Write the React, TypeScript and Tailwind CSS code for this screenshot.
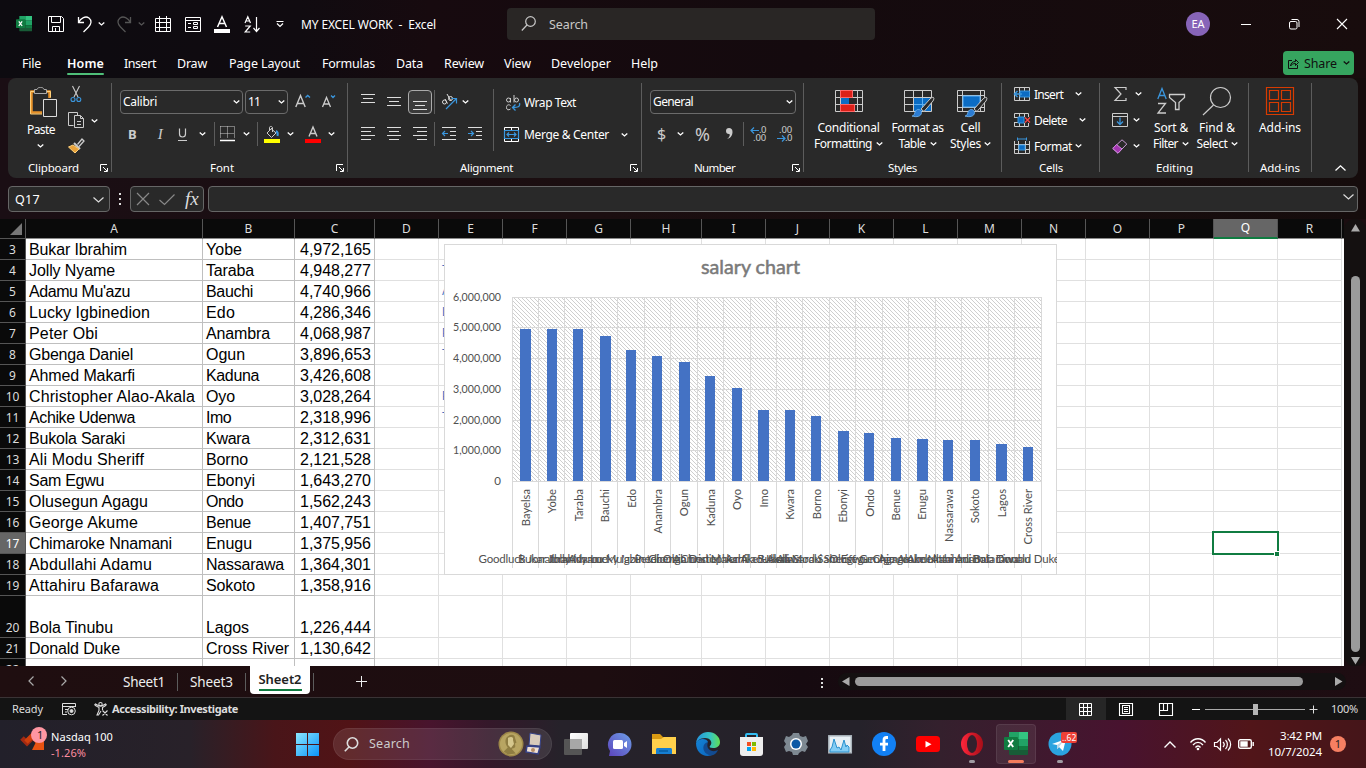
import React, { useLayoutEffect, useRef, useState } from "react";

/* Text stretched or tightened with letter spacing so that it takes exactly w pixels. */
function Fit({ w, children, className = "" }: { w: number; children: string; className?: string }) {
  const ref = useRef<HTMLSpanElement>(null);
  const [ls, setLs] = useState(0);
  useLayoutEffect(() => {
    if (ref.current) {
      const natural = ref.current.getBoundingClientRect().width;
      setLs((w - natural) / children.length);
    }
  }, [w, children]);
  return (
    <span className={"block shrink-0 whitespace-pre " + className} style={{ width: w }}>
      <span ref={ref} style={{ letterSpacing: ls }}>{children}</span>
    </span>
  );
}

function Ic({ w, h, children, className = "", sw = 1 }: { w: number; h: number; children: React.ReactNode; className?: string; sw?: number }) {
  return (
    <svg width={w} height={h} viewBox={`0 0 ${w} ${h}`} fill="none" stroke="currentColor" strokeWidth={sw} className={"block shrink-0 overflow-visible " + className}>
      {children}
    </svg>
  );
}

const Chev = ({ className = "" }: { className?: string }) => (
  <Ic w={7} h={4} sw={1.3} className={className}><path d="M.7.5 3.5 3 6.3.5" /></Ic>
);
const Launcher = ({ className = "" }: { className?: string }) => (
  <Ic w={9} h={9} className={className}><path d="M1.500 7V.5H8M4 3l4 4M8.500 4v3.500H5" /></Ic>
);
const VSep = ({ className = "" }: { className?: string }) => <div className={"w-px shrink-0 bg-[#5c5c5c] " + className} />;

function TitleBar() {
  return (
    <header className="flex h-12 items-center pl-4">
      <ExcelLogo size={16} />
      <Ic w={16} h={16} className="ml-4"><path d="M.5.5h13l2 2v13H.5zM3.500.5v6h9v-6M4.500 15.500v-5h7v5M7.500 12v3.500" /></Ic>
      <Ic w={16} h={17} sw={1.300} className="ml-[13px]"><path d="M1.500 1v5.500H7M1.500 6.500C4 2 8.500-.5 12 2c3 2.500 2.500 6-.5 9l-5 5" /></Ic>
      <Chev className="ml-[5px]" />
      <Ic w={16} h={17} sw={1.300} className="ml-3 text-[#555]"><path d="M13.500 1v5.500H8M13.500 6.500C11 2 6.500-.5 3 2c-3 2.500-2.500 6 .5 9l5 5" /></Ic>
      <Chev className="ml-[5px] text-[#555]" />
      <Ic w={16} h={16} className="ml-[10px]"><path d="M.5 2.500h15v13H.5zM.5 6.500h15M.5 11.500h15M4.500 0v15.500M11.500 0v15.500" /></Ic>
      <Ic w={16} h={15} className="ml-[14px]"><path d="M.5.5h15v14H.5zM.5 3.500h15M3 6.500h3M3 10.500h3M8.500 5.500h4v2h-4zM8.500 9.500h4v2h-4z" /></Ic>
      <Ic w={16} h={17} sw={1.500} className="ml-[13px]"><path d="M3.500 11 8 .8 12.500 11M5 7.500h6" /><path d="M0 13h16v4H0z" fill="#fff" stroke="none" /></Ic>
      <Ic w={17} h={17} sw={1.200} className="ml-[14px]"><path d="M1 7 3.800.7 6.500 7M2 5h3.600M1.200 10h5l-5 6h5M12.500 1v14.500M9.500 12l3 3.500 3-3.500" /></Ic>
      <Ic w={8} h={6} sw={1.200} className="ml-[15px]"><path d="M.5.5h7M1 2.500 4 5.500l3-3" /></Ic>
      <Fit w={135} className="ml-[17px] pt-[2px] text-[12px]">MY EXCEL WORK  -  Excel</Fit>
      <div className="ml-[71px] flex h-8 w-[368px] items-center rounded-[4px] bg-[#292625] pl-[14px] text-[#c8c8c8]">
        <Ic w={16} h={16} sw={1.200}><circle cx="9.500" cy="5.500" r="4.800" /><path d="M6 9 .8 14.500" /></Ic>
        <Fit w={39} className="ml-[12px] pt-[2px] text-[12.500px]">Search</Fit>
      </div>
      <div className="ml-[311px] flex h-6 w-6 items-center justify-center rounded-full bg-[#8764b8]"><Fit w={13} className="text-[11px]">EA</Fit></div>
      <div className="ml-[31px] h-px w-[10px] bg-white" />
      <Ic w={11} h={11} className="ml-[38px]"><rect x=".5" y="2.500" width="7.500" height="7.500" rx="1.500" /><path d="M2.500.5H8a2 2 0 0 1 2 2V8" /></Ic>
      <Ic w={10} h={10} sw={1.100} className="ml-[37px]"><path d="m0 0 10 10M10 0 0 10" /></Ic>
    </header>
  );
}

function ExcelLogo({ size }: { size: number }) {
  return (
    <svg width={size} height={size} viewBox="0 0 24 24" className="block shrink-0">
      <path d="M5 0h10v7H5z" fill="#21a366" /><path d="M15 0h9v7h-9z" fill="#33c481" />
      <path d="M5 7h10v7H5z" fill="#107c41" /><path d="M15 7h9v7h-9z" fill="#21a366" />
      <path d="M5 14h19v8c0 1-1 1-1 1H6c-1 0-1-1-1-1z" fill="#185c37" /><path d="M15 14h9v4h-9z" fill="#107c41" />
      <rect y="5" width="14" height="13" rx="1" fill="#107c41" />
      <path d="m4.200 8 5 7M9.200 8l-5 7" stroke="#fff" strokeWidth="1.900" />
    </svg>
  );
}

function MenuTabs() {
  return (
    <nav className="flex h-[30px] items-center pl-[22px] text-[12.500px]">
      <Fit w={19} className="pt-[2px]">File</Fit>
      <div className="ml-[26px] flex h-full flex-col justify-end pb-[3px]">
        <Fit w={37} className="text-[12.500px] font-semibold leading-[19px]">Home</Fit>
        <div className="h-[2px] w-[37px] rounded bg-[#4fbf79]" />
      </div>
      <Fit w={32} className="ml-5 pt-[2px]">Insert</Fit>
      <Fit w={30} className="ml-[21px] pt-[2px]">Draw</Fit>
      <Fit w={71} className="ml-[22px] pt-[2px]">Page Layout</Fit>
      <Fit w={53} className="ml-[22px] pt-[2px]">Formulas</Fit>
      <Fit w={27} className="ml-[21px] pt-[2px]">Data</Fit>
      <Fit w={40} className="ml-[21px] pt-[2px]">Review</Fit>
      <Fit w={27} className="ml-5 pt-[2px]">View</Fit>
      <Fit w={60} className="ml-5 pt-[2px]">Developer</Fit>
      <Fit w={27} className="ml-5 pt-[2px]">Help</Fit>
      <div className="ml-[625px] flex h-6 w-[71px] items-center rounded-[4px] bg-[#36a55f] pl-[5px] text-[#101010]">
        <Ic w={11} h={11}><path d="M4 2.500H.5v8h9V7M2.500 8c.5-3 2-4.500 5-4.500V1.500L10.500 4.500 7.500 7.500V5.500C5 5.500 3.500 6.500 2.500 8z" /></Ic>
        <Fit w={33} className="ml-[5px] pt-[2px]">Share</Fit>
        <Chev className="ml-[6px]" />
      </div>
    </nav>
  );
}

function Group({ label, lw, className, labelPad, launcher, children }: { label: string; lw: number; className: string; labelPad: string; launcher?: string; children: React.ReactNode }) {
  return (
    <section className={"flex h-full shrink-0 flex-col " + className}>
      <div className="h-[81px]">{children}</div>
      <div className={"flex h-[18px] items-center text-[11.500px] " + labelPad}>
        <Fit w={lw}>{label}</Fit>
        {launcher ? <Launcher className={launcher} /> : null}
      </div>
    </section>
  );
}

const Lines = ({ rows, className = "" }: { rows: number[][]; className?: string }) => (
  <Ic w={14} h={16} className={className}>{rows.map((r, i) => <path key={i} d={`M${r[0]} ${r[1] + 0.5}h${r[2]}`} />)}</Ic>
);

const Brush = () => (
  <g stroke="none">
    <path d="M29.500 7.500c.8.500.3 2-.5 3.500l-9 10.500-3-2.500 9-10c1.500-1.500 2.700-2 3.500-1.500z" fill="#292929" stroke="#c8c8c8" />
    <path d="M8 26c3 0 2-4 4.500-6 2-1.500 5 0 5 2.500 0 4-5 5-9.500 3.500z" fill="#2b7cd3" stroke="#74b7f0" strokeWidth=".8" />
  </g>
);

function Ribbon() {
  return (
    <div className="mx-2 flex h-[100px] rounded-[8px] bg-[#292929] text-[12px] text-white">
      <Group label="Clipboard" lw={51} className="w-[103px]" labelPad="pl-5" launcher="ml-5">
        <div className="flex">
          <div className="w-[58px] pt-[9px]">
            <Ic w={28} h={31} className="ml-[22px]"><path d="M6 4.500H1.500v21H12M17 4.500h2.500V11" stroke="#e8922a" strokeWidth="2.500" /><path d="M.5 27V4.500H6M16 4.500h4.500v6M.5 27H12" stroke="#ffd17b" /><path d="M4.500 6.500v-4H7C7.500.8 8.500.5 10.500.5S13.500.8 14 2.500h2.500v4z" fill="#292929" stroke="#aaa" /><path d="M13.500 12.500h13v17h-13z" fill="#292929" stroke="#ddd" /></Ic>
            <Fit w={28} className="ml-[19px] mt-[3px] leading-[18px]">Paste</Fit>
            <Chev className="ml-[29px] mt-[5px]" />
          </div>
          <div className="flex flex-col pt-2">
            <Ic w={12} h={17} sw={1.100} className="ml-1 text-[#ccc]"><path d="m2.500 0 5.500 11M9.500 0 4 11" /><circle cx="3" cy="13.500" r="2" stroke="#3a96dd" /><circle cx="8.800" cy="13.500" r="2" stroke="#3a96dd" /></Ic>
            <div className="mt-[9px] flex items-center">
              <Ic w={17} h={17} className="ml-[2px] text-[#ccc]"><path d="M9.500 3.500V.5H.5v13h5M6.500 3.500h6l3 3v9h-9zM12.500 3.500v3h3M9 9.500h4M9 12.500h4" /></Ic>
              <Chev className="ml-[6px]" />
            </div>
            <Ic w={17} h={17} className="ml-[2px] mt-[9px]"><path d="m9.500 6.500 4.500-5.500 2 2-5 5.500" stroke="#ccc" strokeWidth="1.300" /><path d="m6 5 6 6" stroke="#ccc" strokeWidth="2" /><path d="M5 7 .5 9l6.500 6 4-4z" fill="#e8a23b" stroke="#ffd17b" /></Ic>
          </div>
        </div>
      </Group>
      <VSep className="mt-[5px] h-[89px]" />
      <Group label="Font" lw={24} className="w-[235px]" labelPad="pl-[98px]" launcher="ml-[101px]">
        <div className="flex pl-2 pt-3">
          <div className="flex h-6 w-[123px] items-center rounded-[4px] border border-[#6b6b6b] pl-[2px]"><Fit w={34}>Calibri</Fit><Chev className="ml-[76px]" /></div>
          <div className="ml-[2px] flex h-6 w-[43px] items-center rounded-[4px] border border-[#6b6b6b] pl-[2px]"><Fit w={12}>11</Fit><Chev className="ml-[18px]" /></div>
          <Ic w={16} h={16} sw={1.400} className="ml-[7px] mt-1 text-[#ccc]"><path d="M.8 13 5.500 1.500 10.200 13M2.500 9.500h6" /><path d="M10.500 3.500 12.700 1.500 15 3.500" stroke="#3a96dd" /></Ic>
          <Ic w={14} h={16} sw={1.300} className="ml-[11px] mt-1 text-[#ccc]"><path d="M.5 13 4.500 3.500 8.500 13M2 10h5" /><path d="m9 1.500 2 2 2-2" stroke="#3a96dd" /></Ic>
        </div>
        <div className="mt-2 flex h-6 items-center pl-4 text-[#ccc]">
          <span className="w-[26px] text-[13px] font-bold leading-6">B</span>
          <span className="w-[24px] font-['Liberation_Serif',serif] text-[15px] italic leading-6">&nbsp;I</span>
          <Ic w={10} h={15} sw={1.200}><path d="M1.500 1.500V7c0 4 6 4 6 0V1.500M0 13.500h9" /></Ic>
          <Chev className="ml-[11px] text-white" />
          <VSep className="ml-2 h-6" />
          <Ic w={16} h={16} className="ml-[5px]"><path d="M.5.5h14M.5.5v12M14.500.5v12M7.500.5v12M.5 7.500h14" strokeDasharray="1 1" /><path d="M0 14.500h15" stroke="#fff" strokeWidth="1.500" /></Ic>
          <Chev className="ml-[7px] text-white" />
          <VSep className="ml-[7px] h-6" />
          <Ic w={16} h={17} className="ml-[6px]"><path d="m8 2-5 5 4.500 4.500 4.500-4.500L7 2.500M5.500 5V1.500C5.500 0 8.500 0 8.500 2v4" /><path d="M12 5c2 1 2 3 1.500 5" stroke="#3a96dd" strokeWidth="2" /><path d="M0 13h16v4H0z" fill="#ff0" stroke="none" /></Ic>
          <Chev className="ml-[7px] text-white" />
          <Ic w={16} h={17} sw={1.400} className="ml-[11px]"><path d="M4 10.500 8 1l4 9.500M5.500 7.500h5" /><path d="M0 13h16v4H0z" fill="red" stroke="none" /></Ic>
          <Chev className="ml-[7px] text-white" />
        </div>
      </Group>
      <VSep className="mt-[5px] h-[89px]" />
      <Group label="Alignment" lw={53} className="w-[293px]" labelPad="pl-[112px]" launcher="ml-[116px]">
        <div className="flex">
          <div className="w-[145px] text-[#ddd]">
            <div className="mt-3 flex h-6 items-center pl-[13px]">
              <Lines rows={[[0, 0, 14], [2, 4, 10], [0, 8, 14]]} />
              <Lines className="ml-3" rows={[[0, 3, 14], [2, 7, 10], [0, 11, 14]]} />
              <div className="ml-[7px] flex h-6 w-6 items-center justify-center rounded-[4px] border border-[#ababab] bg-[#3a3a3a]"><Lines rows={[[0, 7, 14], [2, 11, 10], [0, 15, 14]]} /></div>
              <VSep className="ml-[2px] h-6" />
              <Ic w={17} h={16} className="ml-[6px]"><circle cx="3.500" cy="8" r="2" /><path d="m4 5 2.500 4.500M6 0l4 7" /><circle cx="9.500" cy="4.500" r="2" /><path d="m5 15 10.500-10.500M10.500 4.500h5v5" stroke="#3a96dd" strokeWidth="1.200" /></Ic>
              <Chev className="ml-[4px] text-white" />
            </div>
            <div className="mt-2 flex h-6 items-center pl-[13px]">
              <Lines rows={[[0, 1, 14], [0, 5, 10], [0, 9, 14], [0, 13, 10]]} />
              <Lines className="ml-3" rows={[[0, 1, 14], [2, 5, 10], [0, 9, 14], [2, 13, 10]]} />
              <Lines className="ml-3" rows={[[0, 1, 14], [4, 5, 10], [0, 9, 14], [4, 13, 10]]} />
              <VSep className="ml-[7px] h-6" />
              <Ic w={14} h={16} className="ml-[7px]"><path d="M0 1.500h14M8 5.500h6M8 9.500h6M0 13.500h14" /><path d="M6 7.500H.5M3 5 .5 7.500 3 10" stroke="#3a96dd" strokeWidth="1.200" /></Ic>
              <Ic w={14} h={16} className="ml-3"><path d="M0 1.500h14M8 5.500h6M8 9.500h6M0 13.500h14" /><path d="M0 7.500h5.500M3 5l2.500 2.500L3 10" stroke="#3a96dd" strokeWidth="1.200" /></Ic>
            </div>
          </div>
          <VSep className="mt-[11px] h-[62px]" />
          <div className="pt-[13px]">
            <div className="flex h-6 items-center pl-3">
              <Ic w={15} h={17}><g stroke="#ccc"><circle cx="2.500" cy="5" r="2" /><path d="M4.500 3v4.500M8 0v7.500M4.500 10.500c-2-1.500-4-.5-4 2s2 3 4 1.500" /><circle cx="10.500" cy="5" r="2" /></g><path d="M13.500 8c1 4-2 4.500-6.500 4.500M9.500 9.500 6.500 12.500l3 3" stroke="#3a96dd" strokeWidth="1.300" /></Ic>
              <Fit w={52} className="ml-[3px]">Wrap Text</Fit>
            </div>
            <div className="mt-2 flex h-6 items-center pl-[10px]">
              <Ic w={16} h={16}><path d="M.5 3V.5h14V3M7.500 0v3M.5 12v2.500h14V12M7.500 12v3" /><path d="M.5 3.500h14v8H.5zM3 7.500h9M5 5.500l-2 2 2 2M10 5.500l2 2-2 2" stroke="#3a96dd" strokeWidth="1.200" /></Ic>
              <Fit w={85} className="ml-1">Merge &amp; Center</Fit>
              <Chev className="ml-3" />
            </div>
          </div>
        </div>
      </Group>
      <VSep className="mt-[5px] h-[89px]" />
      <Group label="Number" lw={41} className="w-[161px]" labelPad="pl-[52px]" launcher="ml-[56px]">
        <div className="ml-2 mt-3 flex h-6 w-[146px] items-center rounded-[4px] border border-[#6b6b6b] pl-[2px]"><Fit w={40}>General</Fit><Chev className="ml-[93px]" /></div>
        <div className="mt-2 flex h-6 items-center pl-[15px] text-[#ccc]">
          <span className="w-[20px] text-[16px] leading-6">$</span>
          <Chev className="text-white" />
          <span className="ml-[11px] w-[30px] text-[18px] leading-6">%</span>
          <Ic w={9} h={14}><path d="M4 1a3 3 0 1 0 0 6c1.500 0 1 3-2 5 4-1 5.500-4 5.500-7C7.500 2 6 1 4 1z" fill="#ccc" stroke="none" /></Ic>
          <VSep className="ml-[9px] h-6" />
          <div className="ml-[6px] flex w-4 flex-col items-end text-[9.500px] leading-[8px]"><span className="flex items-center"><Ic w={8} h={7} sw={1.200} className="text-[#3a96dd]"><path d="M0 3.500h8M3 .5 0 3.500l3 3" /></Ic><Fit w={7}>.0</Fit></span><Fit w={13}>.00</Fit></div>
          <div className="ml-[10px] flex w-4 flex-col items-end text-[9.500px] leading-[8px]"><Fit w={13}>.00</Fit><span className="flex items-center"><Ic w={8} h={7} sw={1.200} className="text-[#3a96dd]"><path d="M0 3.500h8M5 .5l3 3-3 3" /></Ic><Fit w={7}>.0</Fit></span></div>
        </div>
      </Group>
      <VSep className="mt-[5px] h-[89px]" />
      <Group label="Styles" lw={29} className="w-[197px]" labelPad="pl-[84px]">
        <div className="flex pt-3 leading-4">
          <div className="flex w-[89px] flex-col items-center">
            <Ic w={28} h={29}><path d="M.5.5h27v21H.5zM.5 7.500h27M.5 14.500h27M5.500 0v22M22.500 0v22" stroke="#ccc" /><path d="M5.500.5h12v7h-12zM5.500 14.500h14v7h-14z" fill="#dc2018" stroke="#f66" /><path d="M6 8h8v6H6z" fill="#0b6cc4" stroke="none" /></Ic>
            <Fit w={62} className="mt-[1px]">Conditional</Fit>
            <div className="flex items-center"><Fit w={58}>Formatting</Fit><Chev className="ml-1" /></div>
          </div>
          <div className="flex w-[49px] flex-col items-center">
            <Ic w={28} h={29}><path d="M.5.5h27v21H.5zM.5 7.500h27M.5 14.500h27M9.500 0v22M18.500 0v22" stroke="#ccc" /><path d="M10 8h17v13H10z" fill="#0b6cc4" stroke="none" /><path d="M10 14.500h17M18.500 8v13" stroke="#5ab0f5" /><Brush /></Ic>
            <Fit w={52} className="mt-[1px]">Format as</Fit>
            <div className="flex items-center"><Fit w={27}>Table</Fit><Chev className="ml-1" /></div>
          </div>
          <div className="flex w-[57px] flex-col items-center">
            <Ic w={28} h={29}><path d="M.5.5h27v21H.5zM.5 5.500h27M.5 17.500h27M5.500 0v22M23.500 0v22" stroke="#ccc" /><path d="M6 6h17v11H6z" fill="#0b6cc4" stroke="#5ab0f5" /><Brush /></Ic>
            <Fit w={20} className="mt-[1px]">Cell</Fit>
            <div className="flex items-center"><Fit w={31}>Styles</Fit><Chev className="ml-[3px]" /></div>
          </div>
        </div>
      </Group>
      <VSep className="mt-[5px] h-[89px]" />
      <Group label="Cells" lw={24} className="w-[97px]" labelPad="pl-[37px]">
        <div className="flex flex-col pl-3 pt-[3px]">
          <div className="flex h-[26px] items-center"><Ic w={16} h={15} className="text-[#ccc]"><path d="M.5.5h15v13H.5zM5.500.5v13M10.500.5v13" /><path d="M6 4h9.500v6H6z" fill="#0b6cc4" stroke="#3a96dd" /><path d="M8 7H.5M3.500 4l-3 3 3 3" stroke="#3a96dd" strokeWidth="1.500" /></Ic><Fit w={29} className="ml-1 pt-px">Insert</Fit><Chev className="ml-3" /></div>
          <div className="flex h-[26px] items-center"><Ic w={16} h={15} className="text-[#ccc]"><path d="M.5 4V.5h14V4M.5 10v3.500h14V10M5.500.5V4M10.500.5V4M5.500 10v3.500M10.500 10v3.500M0 4.500h4M0 9.500h4" /><path d="M4 4h6v6H4z" fill="#0b6cc4" stroke="#3a96dd" /><path d="m11 4.500 5 5M16 4.500l-5 5" stroke="#f44" strokeWidth="1.300" /></Ic><Fit w={33} className="ml-1 pt-px">Delete</Fit><Chev className="ml-3" /></div>
          <div className="flex h-[26px] items-center"><Ic w={16} h={15} className="text-[#ccc]"><path d="M.5 2v12.500h15V2M.5 5.500h15M.5 10.500h15M4.500 2v12.500M11.500 2v12.500" /><path d="M5 6h6v5H5z" fill="#0b6cc4" stroke="#3a96dd" /><path d="M3.500 0h9M3.500-1.500v3M12.500-1.500v3" stroke="#3a96dd" /></Ic><Fit w={38} className="ml-1 pt-px">Format</Fit><Chev className="ml-[3px]" /></div>
        </div>
      </Group>
      <VSep className="mt-[5px] h-[89px]" />
      <Group label="Editing" lw={37} className="w-[148px]" labelPad="pl-[56px]">
        <div className="flex leading-4">
          <div className="flex w-[48px] flex-col pl-3 pt-[3px]">
            <div className="flex h-[26px] items-center"><Ic w={13} h={14} sw={1.200} className="ml-[2px] text-[#ccc]"><path d="M12 3V.5H1l6 6.500-6 6.500h11V11" /></Ic><Chev className="ml-[8px]" /></div>
            <div className="flex h-[26px] items-center"><Ic w={16} h={14} className="text-[#ccc]"><path d="M.5.5h15v13H.5zM.5 3.500h15" /><path d="M8 4.500v7M5 8.500l3 3 3-3" stroke="#3a96dd" strokeWidth="1.300" /></Ic><Chev className="ml-[5px]" /></div>
            <div className="flex h-[26px] items-center"><Ic w={16} h={15}><path d="M10 .8 14.800 5 6 14.200.8 9.500z" stroke="#c89bd4" /><path d="M4.500 5.500.8 9.500 6 14.200l4-4.200z" fill="#a335b0" stroke="#d18ade" /></Ic><Chev className="ml-[5px]" /></div>
          </div>
          <div className="flex w-[46px] flex-col items-center pt-[9px]">
            <Ic w={28} h={28} sw={1.300} className="text-[#ccc]"><path d="M.8 12 5 1.500 9.200 12M2.200 8.500h5.600" stroke="#3a96dd" /><path d="M1 16.500h7.500L1 26h8M12.500 7.500h15v3l-5.500 5v7h-3.500v-7l-6-5z" /></Ic>
            <Fit w={34} className="mt-[5px]">Sort &amp;</Fit>
            <div className="flex items-center"><Fit w={25}>Filter</Fit><Chev className="ml-1" /></div>
          </div>
          <div className="flex w-[46px] flex-col items-center pt-[9px]">
            <Ic w={30} h={28} sw={1.200} className="text-[#ccc]"><circle cx="18.500" cy="10.500" r="10" /><path d="M11.500 18 1 28" /></Ic>
            <Fit w={36} className="mt-[5px]">Find &amp;</Fit>
            <div className="flex items-center"><Fit w={31}>Select</Fit><Chev className="ml-[3px]" /></div>
          </div>
        </div>
      </Group>
      <VSep className="mt-[5px] h-[89px]" />
      <Group label="Add-ins" lw={40} className="w-[62px]" labelPad="pl-[11px]">
        <div className="flex flex-col items-center pt-[9px] leading-4">
          <Ic w={28} h={28} sw={1.200} className="text-[#d83b01]"><path d="M.5.5h27v27H.5zM3.500 3.500h9v9h-9zM15.500 3.500h9v9h-9zM3.500 15.500h9v9h-9zM15.500 15.500h9v9h-9z" /></Ic>
          <Fit w={42} className="mt-[5px]">Add-ins</Fit>
        </div>
      </Group>
      <VSep className="mt-[5px] h-[89px]" />
      <Ic w={11} h={6} sw={1.300} className="ml-[23px] mt-[87px]"><path d="M.5 5.500 5.500.8l5 4.700" /></Ic>
    </div>
  );
}

function FormulaBar() {
  return (
    <div className="flex h-[41px] px-2 pt-2 text-[#ddd]">
      <div className="flex h-[26px] w-[102px] items-center rounded-[4px] border border-[#666] bg-[#292929] pl-[6px]">
        <Fit w={25} className="pt-[2px] text-[12.500px] text-white">Q17</Fit>
        <Ic w={11} h={6} sw={1.200} className="ml-[53px] mt-px"><path d="M.5.5 5.500 5l5-4.500" /></Ic>
      </div>
      <div className="ml-[9px] flex h-[26px] w-[3px] flex-col justify-center gap-[3px]">
        <i className="h-[2px] w-[2px] bg-[#ddd]" /><i className="h-[2px] w-[2px] bg-[#ddd]" /><i className="h-[2px] w-[2px] bg-[#ddd]" />
      </div>
      <div className="ml-2 flex h-[26px] w-[74px] items-center rounded-[4px] border border-[#666] bg-[#292929] pl-[6px]">
        <Ic w={12} h={12} sw={1.200} className="text-[#888]"><path d="m0 0 12 12M12 0 0 12" /></Ic>
        <Ic w={16} h={11} sw={1.200} className="ml-[10px] text-[#888]"><path d="m.5 6 5 4.500L15.500.5" /></Ic>
        <span className="ml-[10px] font-['Liberation_Serif',serif] text-[19px] italic leading-5">fx</span>
      </div>
      <div className="ml-1 flex h-[26px] w-[1150px] justify-end rounded-[4px] border border-[#666] bg-[#292929] pr-[3px] pt-[7px]">
        <Ic w={11} h={6} sw={1.200}><path d="M.5.5 5.500 5l5-4.500" /></Ic>
      </div>
    </div>
  );
}

const COLS: [string, string][] = [
  ["A", "w-[177px]"], ["B", "w-[92px]"], ["C", "w-[80px]"], ["D", "w-[64px]"], ["E", "w-[64px]"], ["F", "w-[64px]"], ["G", "w-[64px]"],
  ["H", "w-[71px]"], ["I", "w-[64px]"], ["J", "w-[64px]"], ["K", "w-[64px]"], ["L", "w-[64px]"], ["M", "w-[64px]"], ["N", "w-[64px]"],
  ["O", "w-[64px]"], ["P", "w-[64px]"], ["Q", "w-[64px]"], ["R", "w-[64px]"],
];

const ROWS: [number, string, string, string, string?][] = [
  [3, "Bukar Ibrahim", "Yobe", "4,972,165"], [4, "Jolly Nyame", "Taraba", "4,948,277", "T"], [5, "Adamu Mu'azu", "Bauchi", "4,740,966", "A"],
  [6, "Lucky Igbinedion", "Edo", "4,286,346", "L"], [7, "Peter Obi", "Anambra", "4,068,987", "P"], [8, "Gbenga Daniel", "Ogun", "3,896,653", "T"],
  [9, "Ahmed Makarfi", "Kaduna", "3,426,608"], [10, "Christopher Alao-Akala", "Oyo", "3,028,264", "P"], [11, "Achike Udenwa", "Imo", "2,318,996", "T"],
  [12, "Bukola Saraki", "Kwara", "2,312,631"], [13, "Ali Modu Sheriff", "Borno", "2,121,528"], [14, "Sam Egwu", "Ebonyi", "1,643,270"],
  [15, "Olusegun Agagu", "Ondo", "1,562,243"], [16, "George Akume", "Benue", "1,407,751"], [17, "Chimaroke Nnamani", "Enugu", "1,375,956"],
  [18, "Abdullahi Adamu", "Nassarawa", "1,364,301"], [19, "Attahiru Bafarawa", "Sokoto", "1,358,916"], [20, "Bola Tinubu", "Lagos", "1,226,444"],
  [21, "Donald Duke", "Cross River", "1,130,642"], [22, "", "", ""],
];

/* Rendered widths of the names in columns A and B. */
const NAME_W = [98, 86, 101, 121, 69, 104, 106, 166, 106, 96, 115, 75, 119, 109, 143, 123, 130, 84, 91, 0];
const STATE_W = [36, 48, 47, 29, 64, 39, 53, 29, 25, 44, 42, 49, 37, 45, 46, 78, 49, 43, 83, 0];

const CHART_DATA: [string, string, number][] = [
  ["Bayelsa", "Goodluck Jonathan", 4951000],
  ...ROWS.slice(0, 19).map((r): [string, string, number] => [r[2], r[1], Number(r[3].replace(/,/g, ""))]),
];

function SalaryChart() {
  const step = 26.45;
  const y = (v: number) => 237 - (v / 6000000) * 184.5;
  return (
    <svg width="613" height="331" viewBox="0 0 613 331" className="block bg-white font-[Lato,sans-serif]">
      <defs>
        <pattern id="hatch" width="4" height="4" patternUnits="userSpaceOnUse">
          <path d="M0 0h1v1H0zM1 1h1v1H1zM2 2h1v1H2zM3 3h1v1H3z" fill="#cfcfcf" shapeRendering="crispEdges" />
        </pattern>
      </defs>
      <rect x=".5" y=".5" width="612" height="330" fill="none" stroke="#d9d9d9" />
      <text x="257" y="30" fontSize="18.500" fill="#7a7a7a" stroke="#7a7a7a" strokeWidth=".5" textLength="99" lengthAdjust="spacingAndGlyphs">salary chart</text>
      <rect x="68" y="53" width="529" height="184" fill="url(#hatch)" />
      {[0, 1, 2, 3, 4, 5, 6].map((n) => (
        <g key={n}>
          <path d={`M68 ${Math.round(y(n * 1e6)) + 0.5}h529`} stroke="#d9d9d9" />
          {n ? <text x="9" y={y(n * 1e6) + 4} fontSize="12" fill="#505050" textLength="48" lengthAdjust="spacingAndGlyphs">{n + ",000,000"}</text>
            : <text x="57" y="241" fontSize="11.500" fill="#505050" textAnchor="end">0</text>}
        </g>
      ))}
      {Array.from({ length: 21 }, (_, i) => <path key={i} d={`M${Math.floor(68 + i * step) + 0.5} 53V324`} stroke="#d9d9d9" />)}
      {CHART_DATA.map(([state, name, v], i) => {
        const c = 68.500 + (i + 0.5) * step;
        const top = Math.floor(y(v)) + 1;
        return (
          <g key={i}>
            <rect x={Math.round(c - 5.500)} y={top} width={i % 3 === 0 ? 11 : 10} height={237 - top} fill="#4472c4" />
            <text transform={`translate(${c + 4} 245) rotate(-90)`} textAnchor="end" fontSize="11.200" fill="#505050">{state}</text>
            <text x={c - 0.5} y="319" textAnchor="middle" fontSize="11.500" letterSpacing="-.2" fill="#505050">{name}</text>
          </g>
        );
      })}
    </svg>
  );
}

function Sheet() {
  return (
    <div className="flex h-[447px]">
      <div className="relative w-[1344px] shrink-0 overflow-hidden bg-white">
        <div className="flex h-5 bg-[#0a0a0a] text-[12px] text-[#ddd]">
          <div className="flex w-[26px] shrink-0 items-end justify-end border-b border-r border-[#555] pb-[3px] pr-[3px]"><Ic w={12} h={12}><path d="M12 0v12H0z" fill="#777" stroke="none" /></Ic></div>
          {COLS.map(([c, w]) => <div key={c} className={`flex shrink-0 items-center justify-center border-r border-[#555] ${w} ${c === "Q" ? "border-b-2 border-b-[#107c41] bg-[#666] text-white" : "border-b border-b-[#8a8a8a]"}`}>{c}</div>)}
          <div className="flex-1 border-b border-[#8a8a8a]" />
        </div>
        {ROWS.map(([n, a, b, c, e], r) => (
          <div key={n} className={`flex items-end font-['Liberation_Sans',sans-serif] text-[16px] leading-5 text-black ${n === 20 ? "h-[42px]" : "h-[21px]"}`}>
            <div className={`flex h-full w-[26px] shrink-0 items-end justify-center border-b border-r border-[#555] font-['Noto_Sans',sans-serif] text-[12px] leading-[18px] ${n === 17 ? "bg-[#666] text-white" : "bg-[#0a0a0a] text-[#ddd]"}`}>{n}</div>
            {COLS.map(([k, w], i) => (
              <div key={k} className={`flex h-full shrink-0 items-end border-b border-r leading-[19px] ${w} ${i < 3 ? "border-[#bfbfbf]" : "border-[#e0e0e0]"} ${i === 2 ? "justify-end pr-[3px]" : i === 4 ? "pl-[3px] text-[12px] text-[#4472c4]" : "pl-[3px]"}`}>
                {i === 0 && a ? <Fit w={NAME_W[r]}>{a}</Fit> : i === 1 && b ? <Fit w={STATE_W[r]}>{b}</Fit> : i === 2 && c ? <Fit w={71}>{c}</Fit> : i === 4 ? e : null}
              </div>
            ))}
          </div>
        ))}
        <div className="absolute left-[444px] top-[25px]"><SalaryChart /></div>
        <div className="absolute left-[1212px] top-[312px] h-[24px] w-[67px] border-2 border-[#107c41]">
          <div className="absolute -bottom-[4px] -right-[3px] h-[6px] w-[6px] border border-white bg-[#107c41]" />
        </div>
      </div>
      <div className="flex w-[22px] flex-col items-center rounded-full bg-[#141010]">
        <Ic w={9} h={8} className="mt-[5px]"><path d="M4.500 0 9 7.500H0z" fill="#aaa" stroke="none" /></Ic>
        <div className="mt-[44px] h-[376px] w-[9px] rounded-full bg-[#9b9b9b]" />
        <Ic w={9} h={8} className="mt-[5px]"><path d="M4.500 7.500 9 0H0z" fill="#aaa" stroke="none" /></Ic>
      </div>
    </div>
  );
}

function SheetTabs() {
  return (
    <div className="flex h-8 items-start border-b border-[#3a3335] pl-[28px] text-[13.500px] text-[#eee]">
      <Ic w={6} h={10} sw={1.200} className="mt-[10px] text-[#aaa]"><path d="M5.500.5 1 5l4.500 4.500" /></Ic>
      <Ic w={6} h={10} sw={1.200} className="ml-[27px] mt-[10px] text-[#aaa]"><path d="M.5.5 5 5 .5 9.500" /></Ic>
      <Fit w={42} className="ml-[56px] leading-8">Sheet1</Fit>
      <VSep className="ml-[12px] mt-[7px] h-[18px]" />
      <Fit w={43} className="ml-[12px] leading-8">Sheet3</Fit>
      <VSep className="ml-[12px] mt-[7px] h-[18px]" />
      <div className="ml-[4px] flex h-7 w-[60px] flex-col items-center rounded-b-[4px] bg-white text-[#222]">
        <Fit w={43} className="mt-[3px] text-[13px] font-semibold leading-5">Sheet2</Fit>
        <div className="h-[2px] w-[43px] bg-[#107c41]" />
      </div>
      <VSep className="ml-[3px] mt-[7px] h-[18px]" />
      <Ic w={11} h={11} className="ml-[42px] mt-[10px]"><path d="M5.500 0v11M0 5.500h11" /></Ic>
      <div className="ml-[454px] mt-[12px] flex flex-col gap-[2px]"><i className="h-[2px] w-[2px] bg-[#ddd]" /><i className="h-[2px] w-[2px] bg-[#ddd]" /><i className="h-[2px] w-[2px] bg-[#ddd]" /></div>
      <div className="ml-[15px] mt-[7px] flex h-[17px] w-[508px] items-center rounded-full bg-[#141011] pl-1">
        <Ic w={8} h={9}><path d="M0 4.500 7.500 0v9z" fill="#aaa" stroke="none" /></Ic>
        <div className="ml-[5px] h-[9px] w-[448px] rounded-full bg-[#9b9b9b]" />
        <Ic w={8} h={9} className="ml-8"><path d="M7.500 4.500 0 0v9z" fill="#aaa" stroke="none" /></Ic>
      </div>
    </div>
  );
}

function StatusBar() {
  return (
    <div className="flex h-[22px] items-center bg-[#141414] pl-3 text-[11px] text-[#ddd]">
      <Fit w={31}>Ready</Fit>
      <Ic w={15} h={13} className="ml-[19px]"><path d="M5 11.500H.5V.5h13V4M.5 3.500h13M3 6.500h3M3 9h2" /><circle cx="9.500" cy="8" r="3.800" /><circle cx="9.500" cy="8" r="1.500" fill="#ddd" /></Ic>
      <Ic w={15} h={14} className="ml-[17px]" sw={1.100}><circle cx="6.500" cy="2.200" r="1.700" /><path d="M.5 3 5 5.500v3L3 13h1.500L7 9M12.500 3 8.500 5.500V8M.5 3l1-1 3.500 2h3l3.500-2 1 1M8.500 8.500l5 5M13.500 8.500l-5 5" /></Ic>
      <Fit w={126} className="ml-[3px] font-bold">Accessibility: Investigate</Fit>
      <div className="ml-[828px] flex h-full w-10 items-center justify-center bg-[#262626] text-white"><Ic w={14} h={13}><path d="M.5.5h12v12H.5zM.5 4.500h12M.5 8.500h12M4.500.5v12M8.500.5v12" /></Ic></div>
      <Ic w={14} h={13} sw={1.100} className="ml-[13px] text-white"><path d="M.5.5h13v12H.5zM3.500 2.500h7v8h-7zM5 4.500h4M5 6.500h4M5 8.500h4" /></Ic>
      <Ic w={14} h={13} sw={1.100} className="ml-[26px] text-white"><path d="M.5.5h13v12H.5zM.5 7.500h8v-7M4.500.5v7" /></Ic>
      <div className="ml-[19px] h-px w-2 bg-white" />
      <div className="ml-[5px] flex h-[11px] w-[100px] items-center"><div className="h-px w-12 bg-[#aaa]" /><div className="h-[11px] w-[5px] bg-[#b5b5b5]" /><div className="h-px flex-1 bg-[#aaa]" /></div>
      <Ic w={9} h={9} className="ml-1"><path d="M4.500.5v8M.5 4.500h8" /></Ic>
      <Fit w={27} className="ml-[13px]">100%</Fit>
    </div>
  );
}

function TaskIcon({ children, active, dot }: { children: React.ReactNode; active?: boolean; dot?: boolean }) {
  return (
    <div className="flex h-12 w-11 flex-col items-center">
      <div className={"mt-1 flex h-10 w-10 flex-col items-center rounded-[4px] pt-2 " + (active ? "border border-[#ffffff14] bg-[#ffffff12] !pt-[7px]" : "")}>
        {children}
        {active ? <div className="mt-1 h-[3px] w-4 rounded-full bg-[#f47c5d]" /> : dot ? <div className="mt-1 h-[3px] w-[6px] rounded-full bg-[#a09ba2]" /> : null}
      </div>
    </div>
  );
}
const Big = ({ children }: { children: React.ReactNode }) => <svg width="24" height="24" viewBox="0 0 24 24" className="block shrink-0 overflow-visible">{children}</svg>;

function Taskbar() {
  return (
    <div className="flex h-12 items-start bg-[linear-gradient(90deg,#22202a_0,#282129_190px,#491519_275px,#511316_350px,#48142d_430px,#34182a_490px,#26222a_560px,#25222a_860px,#34202d_940px,#48132f_1120px,#511519_1250px,#451519_1366px)] text-white">
      <svg width="27" height="26" viewBox="0 0 27 26" className="ml-5 mt-[6px] block shrink-0">
        <path d="m2 12 5 5 6-6" fill="none" stroke="#a32a12" strokeWidth="5" /><path d="m6 16 6-6 8 8" fill="none" stroke="#cf3f0d" strokeWidth="5" /><path d="M12 24h12V13l-4 4-4-1z" fill="#e85211" />
        <circle cx="19" cy="9" r="8" fill="#ff96a2" /><text x="17" y="13" fontSize="11" fill="#222" fontFamily="Noto Sans">1</text>
      </svg>
      <div className="ml-[4px] mt-[9px] text-[11px] leading-4">
        <Fit w={62}>Nasdaq 100</Fit>
        <Fit w={35} className="text-[#ff8ea0]">-1.26%</Fit>
      </div>
      <svg width="23" height="23" viewBox="0 0 23 23" className="ml-[183px] mt-[13px] block shrink-0">
        <defs><linearGradient id="win" x2="1" y2="1"><stop stopColor="#8be7ff" /><stop offset="1" stopColor="#0a93f8" /></linearGradient></defs>
        <path d="M0 0h11v11H0zM12 0h11v11H12zM0 12h11v11H0zM12 12h11v11H12z" fill="url(#win)" />
      </svg>
      <div className="ml-[14px] mt-2 flex h-8 w-[219px] items-center rounded-full border border-[#ffffff10] bg-[#ffffff1a] pl-[10px]">
        <Ic w={15} h={15} sw={1.600} className="text-[#ddd]"><circle cx="8.500" cy="6" r="5.200" /><path d="M5 10 .8 14.300" /></Ic>
        <Fit w={41} className="ml-[10px] pt-px text-[12.500px] text-[#ccc]">Search</Fit>
        <svg width="44" height="26" viewBox="0 0 44 26" className="ml-[88px] block shrink-0">
          <circle cx="13" cy="13" r="12.500" fill="#9e8849" /><circle cx="13" cy="13" r="11" fill="#b8a562" />
          <path d="M9 6c3-3 8-3 8 1l1.500 4.500-1.500 1 .3 3c-.5 2-3 1.500-3.500 2.500l4 4.500-8 1-4-3 4-4c-3-3-3-8-.8-10.500z" fill="#8f7d42" /><path d="M10 7c3-2 6-1 5 2l1 4-3 4-3-3z" fill="#d5c78d" />
          <path d="m32 2 11 2-1 11-11-1z" fill="#d8cbbb" stroke="#344187" /><path d="m29 15 13 1-2 7-12-2z" fill="#efe1d5" stroke="#344187" strokeWidth="1.500" /><circle cx="35" cy="19" r="2" fill="#b58c64" />
        </svg>
      </div>
      <div className="ml-[2px] flex">
        <TaskIcon><Big><defs><linearGradient id="tv" x2="1" y2="1"><stop stopColor="#fff" /><stop offset="1" stopColor="#ddd" /></linearGradient></defs><rect x="6" y="1" width="18" height="16" rx="1" fill="url(#tv)" /><rect y="7" width="18" height="16" rx="1" fill="#555" /><path d="M6 7h12v10H6z" fill="#a7a7a7" /></Big></TaskIcon>
        <TaskIcon><Big><defs><linearGradient id="ch" x1="1" x2="0" y2="1"><stop stopColor="#6e9fe8" /><stop offset="1" stopColor="#5b43bb" /></linearGradient></defs><path d="M12 1a11.500 11.500 0 1 1 0 23H1l1-5A11.500 11.500 0 0 1 12 1z" fill="url(#ch)" /><rect x="5" y="8" width="10" height="9" rx="1.500" fill="#fff" /><path d="m16 11 3-2v7l-3-2z" fill="#fff" /></Big></TaskIcon>
        <TaskIcon><Big><path d="M0 2h8l3 3h12v4H0z" fill="#d99a13" /><path d="M0 7h9l3-2h12v17H0z" fill="#ffd04b" /><path d="M4 22v-4c0-2 1-2 2-2h12c1 0 2 0 2 2v4z" fill="#167fd2" /><path d="M7 19h9" stroke="#075da0" strokeWidth="1.500" /></Big></TaskIcon>
        <TaskIcon><Big>
          <defs><linearGradient id="ed" x2="1"><stop stopColor="#2393df" /><stop offset=".6" stopColor="#36c5c0" /><stop offset="1" stopColor="#62df52" /></linearGradient><linearGradient id="ee" x2="1" y2="1"><stop stopColor="#1482d4" /><stop offset="1" stopColor="#0b65be" /></linearGradient></defs>
          <path d="M0 11C1 4 6 0 12 0c7 0 12 5 12 10 0 4-3 6-7 6-3 0-4-1-3-2 3-3 1-8-5-8-5 0-8 3-9 5z" fill="url(#ed)" /><path d="M0 11c2-5 11-5 12-1-3 2-4 13 6 12-8 5-18 0-18-11z" fill="url(#ee)" /><path d="M12 10c-6 1-6 9-1 12 4 3 9 1 11-4-5 3-13 0-10-8z" fill="#124b91" />
        </Big></TaskIcon>
        <TaskIcon><Big><path d="M6 6V3c0-1 0-1 1-1h9c1 0 1 0 1 1v3" fill="none" stroke="#32bdf2" strokeWidth="2" /><path d="M0 5h23v16c0 2-1 3-3 3H3c-2 0-3-1-3-3z" fill="#eee" /><path d="M7 10h4v4H7z" fill="#f25022" /><path d="M12 10h4v4h-4z" fill="#7fba00" /><path d="M7 15h4v4H7z" fill="#00a4ef" /><path d="M12 15h4v4h-4z" fill="#ffb900" /></Big></TaskIcon>
        <TaskIcon><Big><path d="m9 1 6 0 1 3 3 1 3-1 2 5-2 3 2 3-3 5-3-1-3 2-1 2H9l-1-3-3-1-3 1-2-5 2-3-2-3 2-5 3 1 3-2z" fill="#7e8992" /><circle cx="12" cy="12" r="6" fill="#fff" /><circle cx="12" cy="12" r="4.500" fill="#0b58a5" /></Big></TaskIcon>
        <TaskIcon><Big><rect x=".8" y="3.800" width="22.500" height="17" fill="#e8f0f5" stroke="#a9b3ba" strokeWidth="1.500" /><path d="M2 18l2-3 2-8 3 9 2-1 2 3 3-10 2 7 1-2 2 2v5H2z" fill="#83cdf5" stroke="#2a91ce" /></Big></TaskIcon>
        <TaskIcon><Big><circle cx="12" cy="12" r="12" fill="#1280f4" /><path d="M16 5.500h-1.500c-1.800 0-2.500 1-2.500 2.500v3M8 12.200h8M12 11v8" fill="none" stroke="#fff" strokeWidth="2.800" /></Big></TaskIcon>
        <TaskIcon><Big><rect y="4" width="24" height="16" rx="3.500" fill="red" /><path d="m9.500 9 6 3.200-6 3.300z" fill="#fff" /></Big></TaskIcon>
        <TaskIcon dot><Big><defs><linearGradient id="op" x2="1"><stop stopColor="#ff263b" /><stop offset="1" stopColor="#a70e18" /></linearGradient></defs><ellipse cx="12" cy="12" rx="11" ry="11.500" fill="url(#op)" /><ellipse cx="12" cy="12" rx="5" ry="9" fill="#33202d" /></Big></TaskIcon>
        <TaskIcon active><ExcelLogo size={24} /></TaskIcon>
        <TaskIcon dot><Big><circle cx="12" cy="12" r="11.500" fill="#2ba3df" /><path d="m4 12 14-5-3 12-4-4-2 2v-4z" fill="#fff" /><path d="m9 13 6-4-4 6-2 2z" fill="#b8d5e8" /><rect x="13" y="0" width="16" height="11" rx="2" fill="#ee4037" /><text x="14" y="9" fontSize="8.500" fill="#fff" fontFamily="Noto Sans">..62</text></Big></TaskIcon>
      </div>
      <Ic w={12} h={7} sw={1.400} className="ml-[82px] mt-[21px]"><path d="M.5 6.500 6 1l5.500 5.500" /></Ic>
      <Ic w={16} h={12} sw={1.300} className="ml-[14px] mt-[18px]"><path d="M.5 4.500c4-5 11-5 15 0M3 7c3-3.500 7-3.500 10 0M5.500 9.500c1.500-2 3.500-2 5 0" /><circle cx="8" cy="11" r=".7" fill="#fff" /></Ic>
      <Ic w={17} h={13} sw={1.200} className="ml-2 mt-[18px]"><path d="M.5 4.500h2.500l3.500-3.500v11L3 8.500H.5zM9 4c1.500 1.500 1.500 3.500 0 5M11.500 2c2.500 2.500 2.500 6.500 0 9M14 .5c3.500 3.500 3.500 8.500 0 12" /></Ic>
      <Ic w={16} h={10} sw={1.400} className="ml-[7px] mt-[19px]"><rect x=".7" y=".7" width="12.600" height="8.600" rx="1.500" /><path d="M3 3h6v4H3z" fill="#fff" /><path d="M15.200 3v4" /></Ic>
      <div className="ml-[14px] mt-2 flex flex-col items-end text-[11.500px] leading-4"><Fit w={42}>3:42 PM</Fit><Fit w={54}>10/7/2024</Fit></div>
      <div className="ml-2 mt-4 flex h-4 w-4 items-center justify-center rounded-full bg-[#f67f62] text-[11px] text-[#222]">1</div>
    </div>
  );
}

export default function App() {
  return (
    <div className="flex h-[768px] w-[1366px] flex-col overflow-hidden bg-[#1b0d10] font-['Noto_Sans',sans-serif] text-white">
      <div className="bg-[linear-gradient(90deg,#0d0b10_0,#100b10_300px,#170a0f_430px,#140a0e_800px,#180c0d_1366px)]">
        <TitleBar />
        <MenuTabs />
        <div className="bg-[linear-gradient(90deg,#1a0e14_0,#1b0e10_600px,#150c0c_1366px)]"><Ribbon /><FormulaBar /></div>
      </div>
      <Sheet />
      <div className="bg-[linear-gradient(90deg,#1f0e10_0,#1d0d10_600px,#160a10_800px,#1e0d12_1366px)]"><SheetTabs /></div>
      <StatusBar />
      <Taskbar />
    </div>
  );
}
